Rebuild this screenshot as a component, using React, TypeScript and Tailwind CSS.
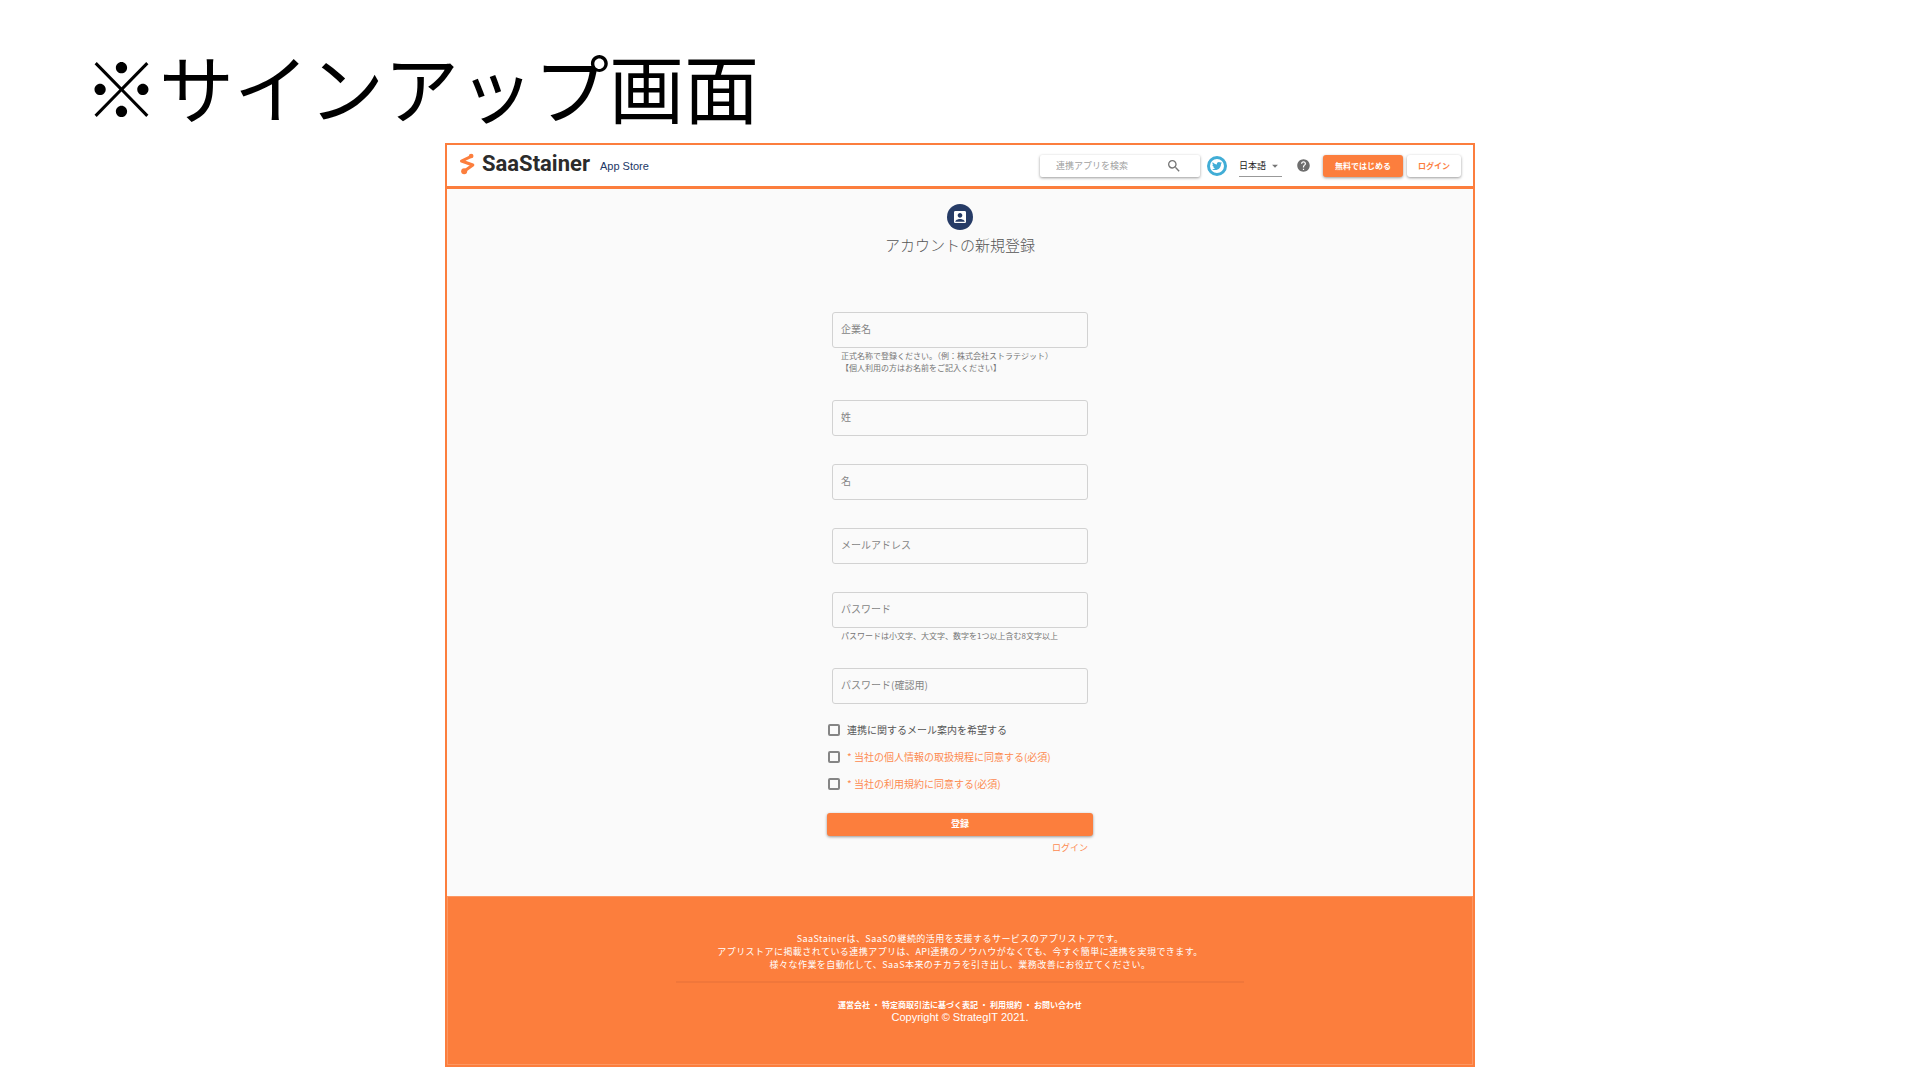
import { useState } from "react";
import type { ReactNode } from "react";
import { MdAccountBox, MdArrowDropDown, MdHelp, MdSearch } from "react-icons/md";
import { FaTwitter } from "react-icons/fa";

interface FieldProps {
  id: string;
  label: string;
  type?: string;
  children?: ReactNode;
}

// Outlined text field. The label sits inside the box until something is typed.
function Field({ id, label, type = "text", children }: FieldProps) {
  const [value, setValue] = useState("");

  return (
    <div className="mb-7 px-[5px]">
      <div className="relative">
        <input
          id={id}
          type={type}
          value={value}
          onChange={(e) => setValue(e.target.value)}
          className="block h-9 w-full rounded-[3px] border border-[#d2d2d2] bg-transparent px-2 text-[10px] text-[#333] outline-none focus:border-[#fc7e3d]"
        />
        {!value && (
          <label
            htmlFor={id}
            className="pointer-events-none absolute inset-y-0 left-[9px] flex items-center pb-[3px] text-[10px] text-[#858585]"
          >
            {label}
          </label>
        )}
      </div>
      {children && (
        <p className="-mb-0.5 pt-0.5 pl-[9px] text-[8px] leading-3 text-[#757575]">{children}</p>
      )}
    </div>
  );
}

interface CheckProps {
  id: string;
  required?: boolean;
  children: ReactNode;
}

function Check({ id, required, children }: CheckProps) {
  return (
    <div className="flex h-[27px] items-center gap-[7px] pl-px">
      <input
        id={id}
        type="checkbox"
        required={required}
        className="size-3 appearance-none rounded-[2px] border-2 border-[#858585] checked:border-[#fc7e3d] checked:bg-[#fc7e3d]"
      />
      <label htmlFor={id} className={required ? "text-[10px] text-[#fd8a50]" : "text-[10px] text-[#555]"}>
        {required && "* "}
        {children}
      </label>
    </div>
  );
}

function LogoMark() {
  return (
    <svg viewBox="62 35 47 66" className="h-[22px] w-4" fill="none" aria-hidden="true">
      <path
        d="M97 46 L69 59 L103 71 L78 89"
        stroke="#fc7e3d"
        strokeWidth="9"
        strokeLinejoin="round"
        strokeLinecap="round"
      />
      <circle cx="98" cy="44" r="7" fill="#fc7e3d" />
      <circle cx="77" cy="90" r="9" fill="#fc7e3d" />
    </svg>
  );
}

function Header() {
  return (
    <header className="flex h-11 items-center border-b-[3px] border-[#fc7e3d] bg-white pr-3 pl-3">
      <a href="#" className="flex items-center gap-[7px] pb-1">
        <LogoMark />
        <span className="font-['Roboto'] text-[22px] leading-5 font-bold text-[#2b2b2b]">SaaStainer</span>
      </a>
      <span className="ml-2.5 font-['Liberation_Sans'] text-[11px] leading-3 text-[#223766]">App Store</span>

      <div className="ml-auto flex h-[22px] w-[160px] items-center rounded-[2px] pr-[18px] pl-4 shadow-[0_1px_3px_rgba(0,0,0,0.4)]">
        <input
          type="search"
          aria-label="連携アプリを検索"
          placeholder="連携アプリを検索"
          className="min-w-0 flex-1 text-[9px] text-[#333] outline-none placeholder:text-[#a0a0a0]"
        />
        <MdSearch className="size-4 text-[#757575]" />
      </div>

      <a
        href="#"
        aria-label="Twitter"
        className="ml-[7px] flex size-5 items-center justify-center rounded-full border-[3px] border-[#41add6] text-[#41add6]"
      >
        <FaTwitter className="size-[10px]" />
      </a>

      <div className="relative ml-3 h-[22px] w-[43px] border-b border-[#999]">
        <select
          aria-label="言語"
          className="block h-[22px] w-full appearance-none bg-transparent text-[9px] leading-[22px] text-[#222] outline-none"
        >
          <option>日本語</option>
          <option>English</option>
        </select>
        <MdArrowDropDown className="pointer-events-none absolute top-1 right-0 size-3.5 text-[#757575]" />
      </div>

      <a href="#" aria-label="ヘルプ" className="ml-3.5 text-[#6e6e6e]">
        <MdHelp className="size-[15px]" />
      </a>
      <button
        type="button"
        className="ml-3 h-[22px] w-20 rounded-[3px] bg-[#fc7e3d] text-[8px] font-bold text-white shadow-[0_1px_3px_rgba(0,0,0,0.4)]"
      >
        無料ではじめる
      </button>
      <button
        type="button"
        className="ml-1 h-[22px] w-[54px] rounded-[3px] bg-white text-[8px] font-bold text-[#fc7e3d] shadow-[0_1px_3px_rgba(0,0,0,0.4)]"
      >
        ログイン
      </button>
    </header>
  );
}

function SignUpForm() {
  return (
    <form className="mx-auto w-full max-w-[266px]" onSubmit={(e) => e.preventDefault()}>
      <Field id="company" label="企業名">
        正式名称で登録ください。（例：株式会社ストラテジット）
        <br />
        【個人利用の方はお名前をご記入ください】
      </Field>
      <Field id="lastName" label="姓" />
      <Field id="firstName" label="名" />
      <Field id="email" label="メールアドレス" type="email" />
      <Field id="password" label="パスワード" type="password">
        パスワードは小文字、大文字、数字を1つ以上含む8文字以上
      </Field>
      <Field id="passwordConfirm" label="パスワード(確認用)" type="password" />

      <div className="-mt-4">
        <Check id="newsletter">連携に関するメール案内を希望する</Check>
        <Check id="privacy" required>
          当社の個人情報の取扱規程に同意する(必須)
        </Check>
        <Check id="terms" required>
          当社の利用規約に同意する(必須)
        </Check>
      </div>

      <button
        type="submit"
        className="mt-4 block h-[23px] w-full rounded-[3px] bg-[#fc7e3d] pb-0.5 text-[9px] font-bold text-white shadow-[0_1px_3px_rgba(0,0,0,0.4)]"
      >
        登録
      </button>
      <div className="mt-1 pr-[5px] text-right text-[9px] leading-4">
        <a href="#" className="text-[#fd8a50]">
          ログイン
        </a>
      </div>
    </form>
  );
}

const footerLinks = ["運営会社", "特定商取引法に基づく表記", "利用規約", "お問い合わせ"];

function Footer() {
  return (
    <footer className="border border-[#fd9762] bg-[#fc7e3d] px-4 pt-[35px] pb-10 text-center text-white">
      <p className="text-[9px] leading-[13px] tracking-wider">
        SaaStainerは、SaaSの継続的活用を支援するサービスのアプリストアです。
        <br />
        アプリストアに掲載されている連携アプリは、API連携のノウハウがなくても、今すぐ簡単に連携を実現できます。
        <br />
        様々な作業を自動化して、SaaS本来のチカラを引き出し、業務改善にお役立てください。
      </p>
      <hr className="mx-auto mt-2.5 max-w-[568px] border-t-2 border-[#f0773b]" />
      <nav className="mt-[15px] flex justify-center text-[8px] leading-[13px] font-bold">
        {footerLinks.map((link, i) => (
          <span key={link} className="flex">
            {i > 0 && <span className="px-0.5">・</span>}
            <a href="#">{link}</a>
          </span>
        ))}
      </nav>
      <p className="font-['Liberation_Sans'] text-[11px] leading-[13px]">Copyright © StrategIT 2021.</p>
    </footer>
  );
}

export default function App() {
  return (
    <div className="min-h-screen bg-white pb-3 font-['Noto_Sans_CJK_JP',sans-serif]">
      <h1 className="px-[84px] pt-11 text-[75px] leading-[84px] font-normal text-black">※サインアップ画面</h1>

      <div className="mx-auto mt-[15px] w-full max-w-[1030px] border-2 border-[#fc7e3d] bg-[#fafafa]">
        <Header />
        <main className="pt-[15px] pb-10">
          <div className="mx-auto flex size-[26px] items-center justify-center rounded-full bg-[#263b66] text-white">
            <MdAccountBox className="size-4" />
          </div>
          <h2 className="mt-1 mb-14 text-center text-[15px] leading-[22px] font-light text-[#555]">
            アカウントの新規登録
          </h2>
          <SignUpForm />
        </main>
        <Footer />
      </div>
    </div>
  );
}
